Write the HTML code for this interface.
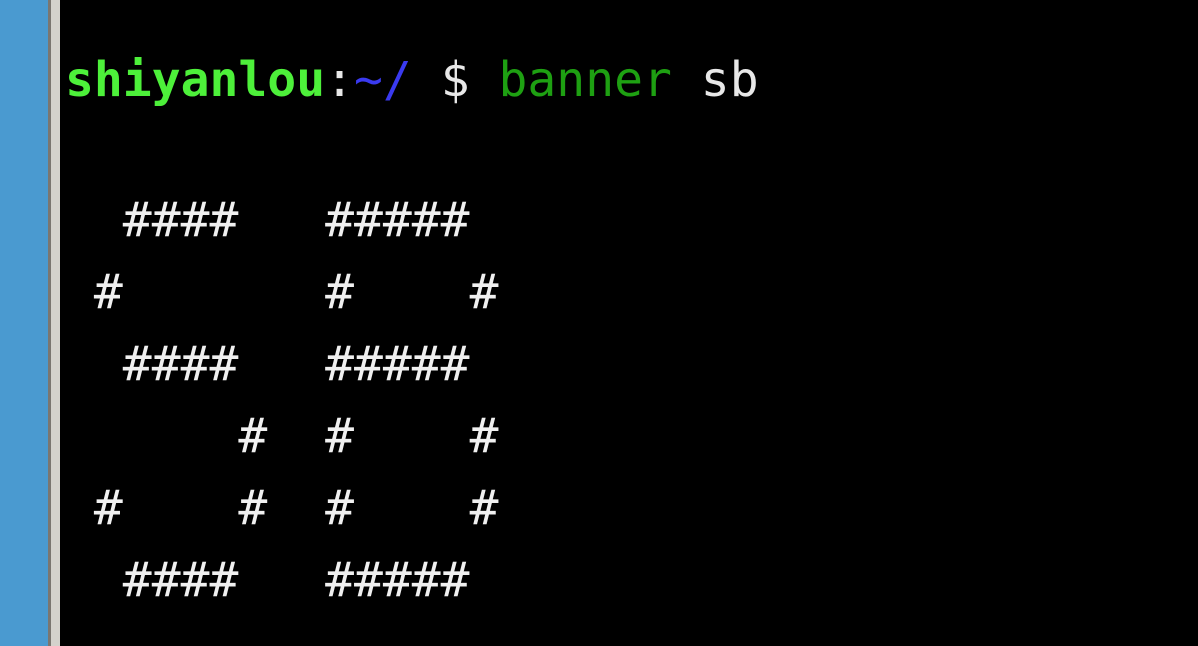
<!DOCTYPE html>
<html><head><meta charset="utf-8"><style>
html,body{margin:0;padding:0;width:1198px;height:646px;overflow:hidden;background:#000;}
.blue{position:absolute;left:0;top:0;width:48px;height:646px;background:#4a9ad0;}
.b1{position:absolute;left:48px;top:0;width:3px;height:646px;background:#7a7670;}
.b2{position:absolute;left:51px;top:0;width:9px;height:646px;background:#d4d2cc;}
pre{position:absolute;left:65px;margin:0;font-family:"DejaVu Sans Mono","Liberation Mono",monospace;font-size:48px;color:#e8e8e8;white-space:pre;}
.p{top:44px;line-height:72px;}
.g{color:#4df03a;font-weight:bold;}
.bl{color:#3a3af0;}
.dg{color:#1ea012;}
.h{top:184px;line-height:72px;font-size:48px;font-weight:normal;color:#f0f0f0;}
</style></head><body>
<div class="blue"></div><div class="b1"></div><div class="b2"></div>
<pre class="p"><span class="g">shiyanlou</span>:<span class="bl">~/</span> $ <span class="dg">banner</span> sb</pre>
<pre class="h">  ####   #####
 #       #    #
  ####   #####
      #  #    #
 #    #  #    #
  ####   #####</pre>
</body></html>
